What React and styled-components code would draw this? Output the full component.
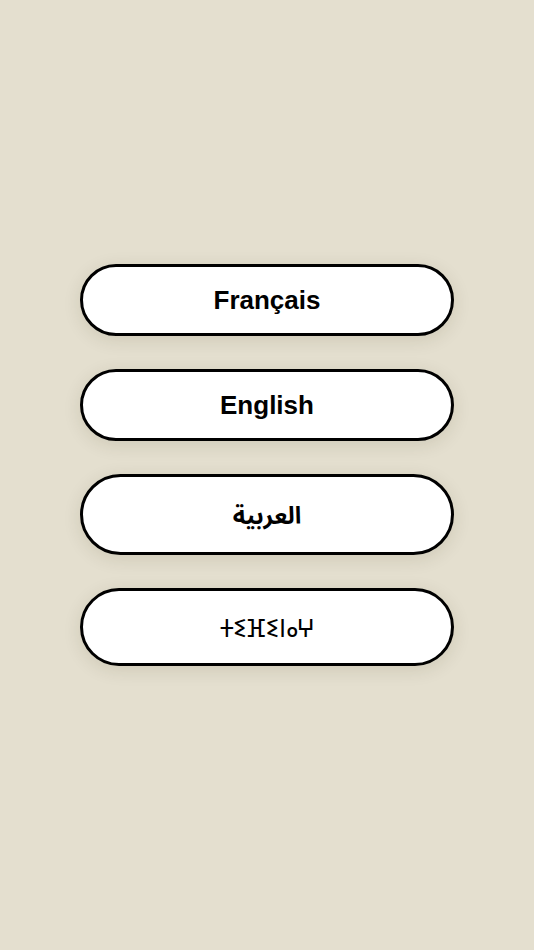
import React from 'react';
import styled, { createGlobalStyle } from 'styled-components';

const GlobalStyle = createGlobalStyle`
    html, body {
        margin: 0;
        padding: 0;
        background: #e4dfcf;
    }
    #root {
        min-height: 100vh;
    }
`;

const Page = styled.div`
    min-height: 100vh;
    box-sizing: border-box;
    display: flex;
    flex-direction: column;
    align-items: center;
    justify-content: center;
    gap: 33px;
    padding-bottom: 21px;
    background: #e4dfcf;
`;

const LangButton = styled.button`
    width: 70%;
    box-sizing: border-box;
    padding: 18px 20px;
    background: #ffffff;
    border: 3px solid #000000;
    border-radius: 999px;
    box-shadow: 0 4px 18px rgba(60, 50, 20, 0.12);
    color: #000000;
    font-family: ${(p) => p.$font};
    font-weight: ${(p) => p.$weight};
    font-size: ${(p) => p.$size}px;
    line-height: ${(p) => p.$line};
    text-align: center;
    cursor: pointer;
`;

const latin = '"Liberation Sans", sans-serif';

const languages = [
    { code: 'fr', label: 'Français', font: latin, weight: 700, size: 26, line: '30px' },
    { code: 'en', label: 'English', font: latin, weight: 700, size: 26, line: '30px' },
    { code: 'ar', label: 'العربية', font: '"Noto Sans Arabic UI", "Noto Sans Arabic", sans-serif', weight: 700, size: 24, line: '39px' },
    { code: 'zgh', label: 'ⵜⵉⴼⵉⵏⴰⵖ', font: '"Noto Sans Tifinagh", sans-serif', weight: 400, size: 25, line: '36px' },
];

export default function App() {
    return (
        <>
            <GlobalStyle />
            <Page>
                {languages.map((lang) => (
                    <LangButton
                        key={lang.code}
                        lang={lang.code}
                        $font={lang.font}
                        $weight={lang.weight}
                        $size={lang.size}
                        $line={lang.line}
                    >
                        {lang.label}
                    </LangButton>
                ))}
            </Page>
        </>
    );
}
